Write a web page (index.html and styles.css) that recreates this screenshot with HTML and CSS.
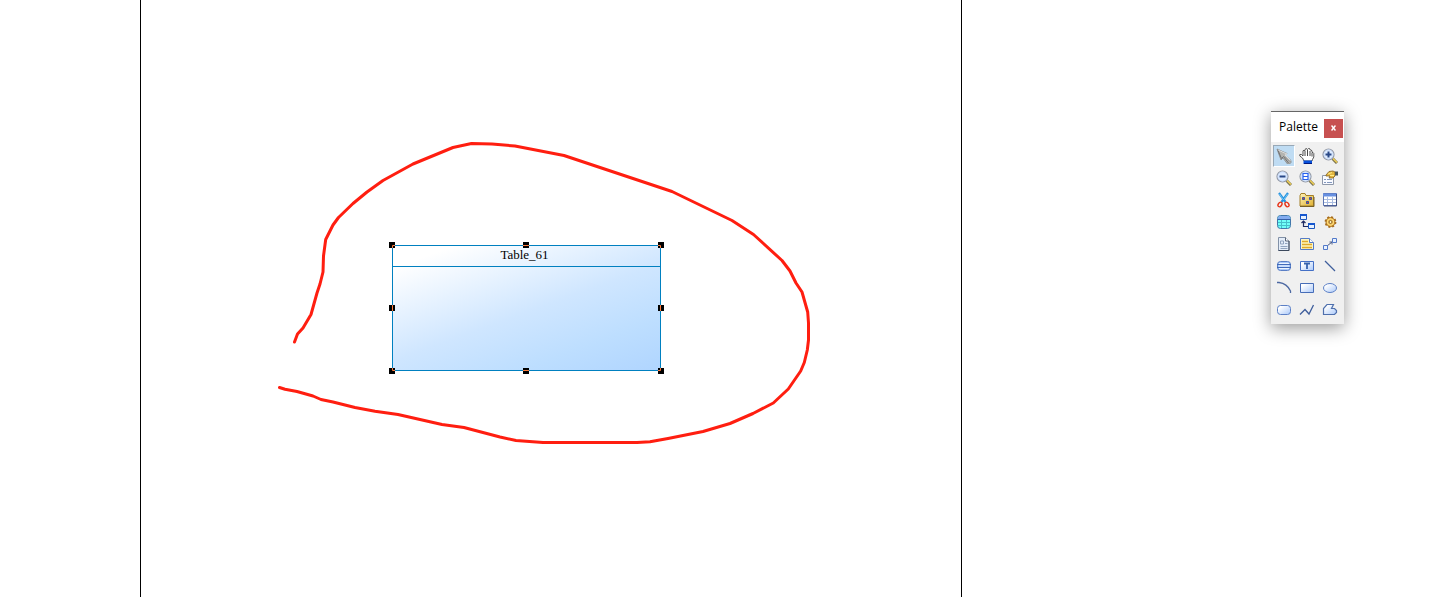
FILE: index.html
```html
<!DOCTYPE html>
<html lang="en">
<head>
<meta charset="utf-8">
<title>Diagram</title>
<link rel="stylesheet" href="styles.css">
</head>
<body>
<main class="canvas">
  <div class="sheet"></div>
  <section class="entity">
    <h1 class="entity-name">Table_61</h1>
    <svg class="handles" width="275" height="132" viewBox="0 0 275 132" aria-hidden="true">
      <path d="M0 0h6v6H0zM134 0h6v6h-6zM269 0h6v6h-6zM0 63h6v6H0zM269 63h6v6h-6zM0 126h6v6H0zM134 126h6v6h-6zM269 126h6v6h-6z"/>
      <path class="cross" d="M3.500 6V3.500H6M134 3.500h6M269 3.500h2.500V6M3.500 63v6M271.500 63v6M3.500 126v2.500H6M134 128.500h6M269 128.500h2.500V126"/>
    </svg>
  </section>
  <svg class="ink" width="1437" height="597" viewBox="0 0 1437 597" aria-hidden="true">
    <path d="M294.500 342L297.500 334L303 328L311 314.500L317 293L320 284L323 272L323.500 256L325.700 239.500L333 225L338.500 217.500L353 203.500L367 192L383 180.500L413 164L453 147.500L471.500 143.500L492 144L515 146L564 155.500L672 191.500L732 220.500L753.500 234.500L782 260.500L790 271L796 283L802 292L807.700 312L808.500 323V340L807.300 350L804.300 362.500L800.700 371L788.300 389L773.300 403L753 413.500L730 423.500L703 431.500L668 438.500L650 441.800L637 442.500H543L516 440.500L500 437L464 427.500L442 424.500L398 414.500L375 411.200L355 407.500L333 402L321 399.500L313 396L297 391.500L285 389.200L279.500 387.500"/>
  </svg>
</main>

<svg class="defs" width="0" height="0" aria-hidden="true">
  <defs>
    <linearGradient id="blue" x1="0" y1="0" x2="1" y2="1"><stop offset=".2" stop-color="#fff"/><stop offset="1" stop-color="#a9c8fa"/></linearGradient>
    <linearGradient id="gold" x1="0" y1="0" x2="1" y2="1"><stop offset="0" stop-color="#fff3b8"/><stop offset="1" stop-color="#dfb030"/></linearGradient>
    <g id="lens"><path d="M10.500 10.500l4.500 4.500" stroke="#77704f" stroke-width="3"/><path d="M10.500 10l4.500 4.500" stroke="#edcd55" stroke-width="1.600"/><circle cx="6.500" cy="6.500" r="5.500" fill="#dfecff" stroke="#9399a6" stroke-width="1.200"/><circle cx="6.500" cy="6.500" r="4.500" stroke="#c4d9fa" stroke-width=".8"/></g>
  </defs>
</svg>

<aside class="palette" aria-label="Palette">
  <header class="palette-bar">
    <span class="palette-title">Palette</span>
    <button class="close" aria-label="Close"><svg width="5" height="6" viewBox="0 0 5 6"><path d="M.5 .5l4 5M4.500 .5l-4 5"/></svg></button>
  </header>
  <div class="tools">
    <button class="tool active" aria-label="Pointer"><svg viewBox="0 0 16 16"><path d="M1 1l10 4.500-1.500 2L15 12.500v2L13.500 16h-2L7 10l-2 2z" fill="#b4b4b0" stroke="#858686" stroke-width=".8"/><path d="M2 2l9 4-2 1 5.500 5.500" stroke="#ddd"/><path d="M2 2.500l3.500 8 2-2 5 6.500" stroke="#6f7072"/><path d="M8.500 8.500l5 5" stroke="#999"/></svg></button>
    <button class="tool" aria-label="Grabber"><svg viewBox="0 0 16 16"><path d="M5 13L3.500 10 .8 8V6.500h1.700L4 8V3l.8-1 .8 1L6.500 .800h1.500L8.500 1.500 9.500 .5h1l.7 1.500 1 0 .8 1v1.500l1 0 .8 1V9l-1.300 2.500L13 13z" fill="#fff" stroke="#444" stroke-width=".9"/><path d="M6 3v5M8.500 2v6M11 3v5M13 5v3.500" stroke="#333" stroke-width=".9"/><path d="M4.500 12.500h8.500V16H4.500z" fill="#0750dc"/><path d="M5 15.500h8" stroke="#001a80"/></svg></button>
    <button class="tool" aria-label="Zoom in"><svg viewBox="0 0 16 16"><use href="#lens"/><path d="M3.500 6.500h6M6.500 3.500v6" stroke="#294887" stroke-width="2"/></svg></button>

    <button class="tool" aria-label="Zoom out"><svg viewBox="0 0 16 16"><use href="#lens"/><path d="M3.500 6.500h6" stroke="#294887" stroke-width="2"/></svg></button>
    <button class="tool" aria-label="Open diagram"><svg viewBox="0 0 16 16"><use href="#lens"/><path d="M4 3.500h5v6H4z" fill="#fff" stroke="#2861ed" stroke-width="1.200"/><path d="M4 6.500h5" stroke="#2861ed"/></svg></button>
    <button class="tool" aria-label="Properties"><svg viewBox="0 0 16 16"><path d="M.5 5.500h11v9H.5z" fill="#f8faff" stroke="#8e98aa"/><path d="M2 9.500h2M2 12.500h2M5 9.500h5M5 12.500h5" stroke="#8297bd"/><path d="M4 5l3-3.500 4-.5 2 1v4l-2 2H7l1-2H4z" fill="#e3b640" stroke="#81601e" stroke-width=".8"/><path d="M6 4l4-1.500M8 5.500h4" stroke="#ffed86"/><path d="M13 1.500h3v4h-3z" fill="#46545a"/></svg></button>

    <button class="tool" aria-label="Delete"><svg viewBox="0 0 16 16"><path d="M3 1l6.500 9M12 1L5.500 10" stroke="#2793df" stroke-width="2.200"/><path d="M3.500 2l4 6M11.500 2l-4 6" stroke="#8bd7fb" stroke-width=".7"/><ellipse cx="4" cy="12.500" rx="1.700" ry="2.500" transform="rotate(35 4 12.500)" stroke="#e63318" stroke-width="1.400"/><ellipse cx="11" cy="12.500" rx="1.700" ry="2.500" transform="rotate(-35 11 12.500)" stroke="#e63318" stroke-width="1.400"/></svg></button>
    <button class="tool" aria-label="Package"><svg viewBox="0 0 16 16"><path d="M1 3.500l1-2h4l1 2h7.500v10.500H1z" fill="url(#gold)" stroke="#a4802a"/><path d="M1 14.500h14V5" stroke="#786026"/><path d="M3.500 5.500h2v2h-2zM10.500 5.500h2v2h-2zM7.500 9.500h2v2h-2z" fill="#267ae0" stroke="#243d9c" stroke-width=".8"/><path d="M4 6.500h1M11 6.500h1M8 10.500h1" stroke="#e4441d"/></svg></button>
    <button class="tool" aria-label="Table"><svg viewBox="0 0 16 16"><path d="M1.500 1.500h13v12h-13z" fill="#fff" stroke="#5c75b2"/><path d="M1 3h14" stroke="#668fe0" stroke-width="3"/><path d="M2 7.500h12M2 10.500h12M5.500 5v8M10.500 5v8" stroke="#a9bce0"/><path d="M14.500 2v12H2" stroke="#3e4f80"/></svg></button>

    <button class="tool" aria-label="View"><svg viewBox="0 0 16 16"><rect x="1.500" y="1.500" width="13" height="13" rx="3" fill="#70fff8" stroke="#4277aa"/><path d="M3 2h10l1.500 3h-13z" fill="#83acf0"/><path d="M2 8.500h12M2 11.500h12M5.500 5v9M10.500 5v9" stroke="#46bfcb"/><path d="M2 5.500h12" stroke="#3560a8"/></svg></button>
    <button class="tool" aria-label="Reference"><svg viewBox="0 0 16 16"><path d="M1.500 .5h6v5h-6zM9.500 9.500h6v5h-6z" fill="#e7f1ff" stroke="#1c57bd"/><path d="M1 1h7M9 10h7" stroke="#1557cf" stroke-width="2"/><path d="M4.500 7v5.500H9M2.500 9l2-2 2 2" stroke="#202c62" stroke-width="1.200"/></svg></button>
    <button class="tool" aria-label="Procedure"><svg viewBox="0 0 16 16"><circle cx="8.500" cy="8" r="4.500" fill="#efbd54" stroke="#af7620"/><circle cx="8.500" cy="8" r="5" stroke="#a66c1c" stroke-width="1.800" stroke-dasharray="2 1.930"/><circle cx="8.500" cy="8" r="3.200" stroke="#ffdd7a"/><circle cx="8.500" cy="8" r="1.500" fill="#fff4c2" stroke="#8e6526"/></svg></button>

    <button class="tool" aria-label="File"><svg viewBox="0 0 16 16"><path d="M2.500 1.500h7l3.500 3.500v9.500H2.500z" fill="#e4edf9" stroke="#8291a7"/><path d="M9.500 1.500V5H13" fill="#fff" stroke="#596477"/><path d="M4.500 5h3v3h-3zM9 7.500h2.500M4.500 10.500h7M4.500 12.500h7" stroke="#91a3bd"/><path d="M2.500 14.500H13V5" stroke="#3c495d"/></svg></button>
    <button class="tool" aria-label="Note"><svg viewBox="0 0 16 16"><path d="M1.500 2.500h9l4 4v7h-13z" fill="#fff6bf" stroke="#557bc7"/><path d="M10.500 2.500v4h4" fill="#fff" stroke="#557bc7"/><path d="M3 5.500h6M3 8.500h10M3 11.500h10" stroke="#e0aa2b" stroke-width="1.600"/></svg></button>
    <button class="tool" aria-label="Link"><svg viewBox="0 0 16 16"><path d="M5 10l5-4M7.500 6H10v2.500" stroke="#4c5d87"/><path d="M1.500 9.500h4v4h-4zM10.500 2.500h4v4h-4z" fill="#e8f1ff" stroke="#5279c9"/></svg></button>

    <button class="tool" aria-label="Title"><svg viewBox="0 0 16 16"><rect x="1.500" y="3.500" width="13" height="9" rx="3" fill="#a9c8fa" stroke="#5c80c6"/><path d="M1 6.500h14M1 9.500h14" stroke="#416bba"/><path d="M3 5.500h10M3 8h10M3 10.500h10" stroke="#edf5ff"/></svg></button>
    <button class="tool" aria-label="Text"><svg viewBox="0 0 16 16"><path d="M1.500 3.500h13v9h-13z" fill="url(#blue)" stroke="#4470c6"/><path d="M5 5.500h6M8 5v6" stroke="#3562ae" stroke-width="1.800"/></svg></button>
    <button class="tool" aria-label="Line"><svg viewBox="0 0 16 16"><path d="M3 3l10 10" stroke="#3f5e9c" stroke-width="1.300"/></svg></button>

    <button class="tool" aria-label="Arc"><svg viewBox="0 0 16 16"><path d="M1 2.500h2Q11 3.500 14.500 11v2" stroke="#4d69a2" stroke-width="1.300"/></svg></button>
    <button class="tool" aria-label="Rectangle"><svg viewBox="0 0 16 16"><path d="M1.500 3.500h13v9h-13z" fill="url(#blue)" stroke="#466db8"/></svg></button>
    <button class="tool" aria-label="Ellipse"><svg viewBox="0 0 16 16"><ellipse cx="8" cy="8" rx="6.500" ry="4.500" fill="url(#blue)" stroke="#5c80c6"/></svg></button>

    <button class="tool" aria-label="Rounded rectangle"><svg viewBox="0 0 16 16"><rect x="1.500" y="3.500" width="13" height="9" rx="3" fill="url(#blue)" stroke="#5c80c6"/></svg></button>
    <button class="tool" aria-label="Polyline"><svg viewBox="0 0 16 16"><path d="M1 12.500l5-5 4 4.500 4.500-9" stroke="#3f5e9c" stroke-width="1.300"/></svg></button>
    <button class="tool" aria-label="Polygon"><svg viewBox="0 0 16 16"><path d="M1.500 12.500v-6L5 2.500h6.500L9.500 6.500h3l2 2v2l-2 2z" fill="url(#blue)" stroke="#4f70ad" stroke-width="1.200"/></svg></button>
  </div>
</aside>
</body>
</html>
```
FILE: styles.css
```css
* {
  box-sizing: border-box;
}

body {
  margin: 0;
  min-height: 100vh;
  background: #fff;
  overflow: hidden;
}

.canvas {
  position: relative;
  height: 100vh;
}

.sheet {
  width: 822px;
  height: 100%;
  margin-left: 140px;
  border: solid #000;
  border-width: 0 1px;
}

.entity {
  position: absolute;
  left: 392px;
  top: 245px;
  width: 269px;
  height: 126px;
  border: 1px solid #0080c0;
  background: linear-gradient(160deg, #fff 10%, #cfe6ff 52%, #bddeff 77%, #b0d5ff);
}

.entity-name {
  margin: 0;
  padding-right: 4px;
  height: 21px;
  border-bottom: 1px solid #0080c0;
  color: #000;
  font: 400 13px/18px "Liberation Serif", serif;
  text-align: center;
}

.handles {
  position: absolute;
  left: -4px;
  top: -4px;
}

.cross {
  fill: none;
  stroke: #ff7f3f;
}

.ink {
  position: absolute;
  left: 0;
  top: 0;
  pointer-events: none;
}

.ink path {
  fill: none;
  stroke: #ff1e10;
  stroke-width: 3;
  stroke-linecap: round;
  stroke-linejoin: round;
}

.defs {
  position: absolute;
}

.palette {
  position: absolute;
  left: 1271px;
  top: 111px;
  width: 73px;
  border-top: 1px solid #666;
  background: #f0f0f0;
  box-shadow: 0 4px 16px rgba(0, 0, 0, .4);
}

.palette-bar {
  display: flex;
  align-items: center;
  justify-content: space-between;
  height: 30px;
  padding: 2px 1px 0 8px;
  background: #fff;
}

.palette-title {
  padding-bottom: 2px;
  color: #000;
  font: 12px/16px "Open Sans", sans-serif;
}

.close {
  display: flex;
  align-items: center;
  justify-content: center;
  width: 19px;
  height: 19px;
  padding: 0;
  border: 0;
  background: #c75050;
}

.close path {
  stroke: #fff;
  stroke-width: 1.5;
}

.tools {
  display: grid;
  grid-template-columns: repeat(3, 23px);
  grid-auto-rows: 22px;
  padding: 3px 2px;
}

.tool {
  display: flex;
  align-items: center;
  justify-content: center;
  width: 22px;
  height: 22px;
  padding: 0;
  border: 1px solid transparent;
  background: none;
}

.tool.active {
  border-color: #98a8b6 #fff #fff #98a8b6;
  background: #bfdcf3;
}

.tool svg {
  width: 16px;
  height: 16px;
  fill: none;
}
```
